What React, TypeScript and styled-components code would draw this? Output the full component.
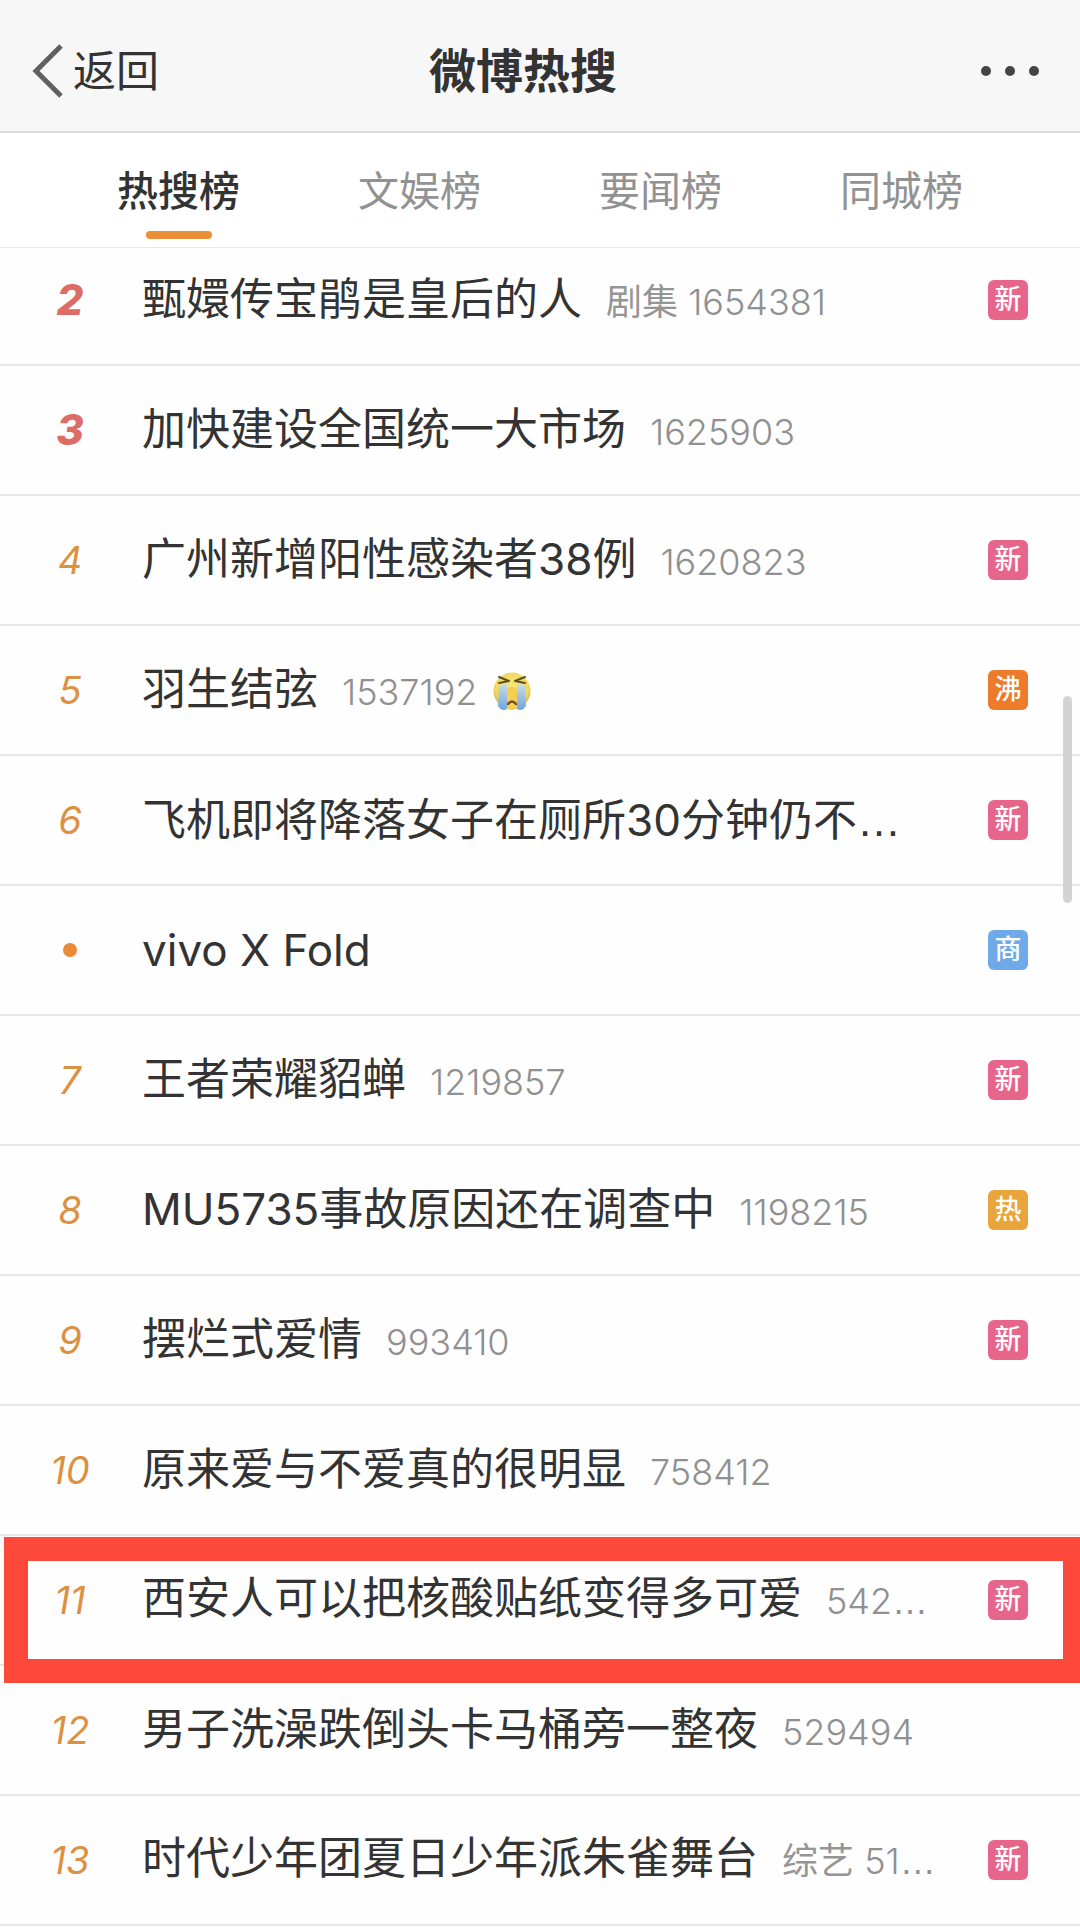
import React from "react";
import styled, { createGlobalStyle, css } from "styled-components";

const GlobalStyle = createGlobalStyle`
  *, *::before, *::after { box-sizing: border-box; }
  body {
    margin: 0;
    background: #fefefe;
    color: #333;
    font-family: Inter, "Noto Sans CJK SC", sans-serif;
    overflow-x: hidden;
  }
  button { border: 0; padding: 0; background: none; font: inherit; color: inherit; cursor: pointer; }
`;

const Page = styled.div`
  position: relative;
  overflow: hidden;
`;

const Header = styled.header`
  display: grid;
  grid-template-columns: 1fr auto 1fr;
  align-items: center;
  height: 133px;
  padding: 10px 40px 0 32px;
  background: #f7f7f7;
  border-bottom: 2px solid #dcdcdc;
`;

const BackButton = styled.button`
  display: flex;
  align-items: center;
  justify-self: start;
  gap: 9px;
  font-size: 43px;
  line-height: 56px;
`;

const Title = styled.h1`
  margin: 0;
  padding-right: 26px;
  font-size: 47px;
  line-height: 56px;
  font-weight: 700;
`;

const MoreButton = styled.button`
  display: flex;
  justify-self: end;
`;

const Tabs = styled.nav`
  position: relative;
  z-index: 1;
  display: grid;
  grid-template-columns: repeat(4, 1fr);
  height: 115px;
  padding: 0 58px;
  background: #fff;
  border-bottom: 1px solid #e8e8e8;
`;

const Tab = styled.button<{ $active?: boolean }>`
  display: flex;
  flex-direction: column;
  align-items: center;
  padding-top: 30px;
  font-size: 41px;
  line-height: 56px;
  color: #929292;
  ${(p) =>
    p.$active &&
    css`
      color: #333;
      font-weight: 500;
      &::after {
        content: "";
        width: 66px;
        height: 8px;
        margin-top: 12px;
        border-radius: 4px;
        background: #ea8f35;
      }
    `}
`;

/* The list is scrolled a little way under the tab bar. */
const List = styled.ol`
  list-style: none;
  margin: -12px 0 0;
  padding: 0;
`;

const Row = styled.li`
  position: relative;
  height: 130px;
  border-bottom: 2px solid #e6e6e6;
`;

const RowLink = styled.a`
  display: grid;
  grid-template-columns: 142px 1fr 40px;
  align-items: center;
  height: 100%;
  padding-right: 52px;
  color: inherit;
  text-decoration: none;
`;

const Rank = styled.span<{ $top?: boolean }>`
  display: flex;
  justify-content: center;
  padding-right: 2px;
  font-size: 38px;
  line-height: 56px;
  font-style: italic;
  color: #dc9142;
  ${(p) =>
    p.$top &&
    css`
      font-size: 42px;
      font-weight: 800;
      color: #dd6b66;
    `}
`;

const Dot = styled.i`
  width: 14px;
  height: 14px;
  border-radius: 50%;
  background: #ea8a35;
`;

const Topic = styled.span`
  display: flex;
  align-items: baseline;
  gap: 24px;
  min-width: 0;
  white-space: nowrap;
  font-size: 44px;
  line-height: 60px;
`;

const Heat = styled.span`
  display: flex;
  align-items: baseline;
  gap: 16px;
  font-size: 36px;
  font-weight: 300;
  color: #909090;
  svg { align-self: center; }
`;

const Category = styled.span`
  font-weight: 400;
  color: #959595;
`;

const Ellipsis = styled.span`
  font-family: "Liberation Sans", sans-serif;
`;

const badgeColors = {
  新: "#e7658a",
  沸: "#ee7a2c",
  商: "#70a9ea",
  热: "#eaa43c",
};

type BadgeKind = keyof typeof badgeColors;

const Badge = styled.span<{ $kind: BadgeKind }>`
  display: flex;
  align-items: center;
  justify-content: center;
  height: 40px;
  border-radius: 6px;
  background: ${(p) => badgeColors[p.$kind]};
  color: #fff;
  font-size: 27px;
  line-height: 40px;
  font-weight: 500;
`;

const Marker = styled.div`
  position: absolute;
  top: 1px;
  left: 4px;
  right: -7px;
  height: 146px;
  border: 24px solid #fd493a;
  z-index: 1;
  pointer-events: none;
`;

const ScrollThumb = styled.div`
  position: absolute;
  top: 696px;
  right: 8px;
  width: 9px;
  height: 207px;
  border-radius: 5px;
  background: #d3d3d3;
`;

const CryingFace = () => (
  <svg width="38" height="40" viewBox="0 0 38 40" role="img" aria-label="泪">
    <defs>
      <radialGradient id="face" cx="50%" cy="40%" r="60%">
        <stop offset="0" stopColor="#fbe77a" />
        <stop offset="0.75" stopColor="#f0d65c" />
        <stop offset="1" stopColor="#cdb04a" />
      </radialGradient>
      <linearGradient id="tear" x1="0" y1="0" x2="0" y2="1">
        <stop offset="0" stopColor="#c9dce0" />
        <stop offset="1" stopColor="#6ea4df" />
      </linearGradient>
    </defs>
    <circle cx="19" cy="19" r="18.5" fill="url(#face)" />
    <path d="M6 13 L14 12 L14 37 Q9 40 5 34 Z" fill="url(#tear)" />
    <path d="M32 13 L24 12 L24 37 Q29 40 33 34 Z" fill="url(#tear)" />
    <path d="M14 17 Q19 12 24 17 V36 Q19 40 14 36 Z" fill="#f5cf54" />
    <path d="M6 5 L16 9 L6 11 M32 5 L22 9 L32 11" fill="none" stroke="#5e5128" strokeWidth="2" strokeLinecap="round" strokeLinejoin="round" />
    <path d="M15 32 Q19 27 23 32" fill="none" stroke="#7c4f20" strokeWidth="2.4" strokeLinecap="round" />
  </svg>
);

interface Item {
  rank?: number;
  title: string;
  category?: string;
  heat?: string;
  badge?: BadgeKind;
  crying?: boolean;
  marked?: boolean;
}

const items: Item[] = [
  { rank: 2, title: "甄嬛传宝鹃是皇后的人", category: "剧集", heat: "1654381", badge: "新" },
  { rank: 3, title: "加快建设全国统一大市场", heat: "1625903" },
  { rank: 4, title: "广州新增阳性感染者38例", heat: "1620823", badge: "新" },
  { rank: 5, title: "羽生结弦", heat: "1537192", badge: "沸", crying: true },
  { rank: 6, title: "飞机即将降落女子在厕所30分钟仍不…", badge: "新" },
  { title: "vivo X Fold", badge: "商" },
  { rank: 7, title: "王者荣耀貂蝉", heat: "1219857", badge: "新" },
  { rank: 8, title: "MU5735事故原因还在调查中", heat: "1198215", badge: "热" },
  { rank: 9, title: "摆烂式爱情", heat: "993410", badge: "新" },
  { rank: 10, title: "原来爱与不爱真的很明显", heat: "758412" },
  { rank: 11, title: "西安人可以把核酸贴纸变得多可爱", heat: "542…", badge: "新", marked: true },
  { rank: 12, title: "男子洗澡跌倒头卡马桶旁一整夜", heat: "529494" },
  { rank: 13, title: "时代少年团夏日少年派朱雀舞台", category: "综艺", heat: "51…", badge: "新" },
];

const tabs = ["热搜榜", "文娱榜", "要闻榜", "同城榜"];

/* Sets a trailing ellipsis with wider dots than the text face has. */
const Clipped = ({ text }: { text: string }) =>
  text.endsWith("…") ? (
    <span>
      {text.slice(0, -1)}
      <Ellipsis>…</Ellipsis>
    </span>
  ) : (
    <span>{text}</span>
  );

export default function App() {
  return (
    <Page>
      <GlobalStyle />
      <Header>
        <BackButton>
          <svg width="32" height="54" viewBox="0 0 32 54" aria-hidden="true">
            <path d="M29 2 L4 27 L29 52" fill="none" stroke="#606060" strokeWidth="5" />
          </svg>
          返回
        </BackButton>
        <Title>微博热搜</Title>
        <MoreButton aria-label="更多">
          <svg width="60" height="12" viewBox="0 0 60 12" aria-hidden="true">
            <g fill="#444">
              <circle cx="6" cy="6" r="5" />
              <circle cx="30" cy="6" r="5" />
              <circle cx="54" cy="6" r="5" />
            </g>
          </svg>
        </MoreButton>
      </Header>
      <Tabs>
        {tabs.map((name, i) => (
          <Tab key={name} $active={i === 0}>
            {name}
          </Tab>
        ))}
      </Tabs>
      <List>
        {items.map((item) => (
          <Row key={item.title}>
            <RowLink href="#">
              <Rank $top={item.rank !== undefined && item.rank <= 3}>{item.rank ?? <Dot />}</Rank>
              <Topic>
                <Clipped text={item.title} />
                {item.heat && (
                  <Heat>
                    <span>
                      {item.category && <Category>{item.category} </Category>}
                      <Clipped text={item.heat} />
                    </span>
                    {item.crying && <CryingFace />}
                  </Heat>
                )}
              </Topic>
              {item.badge && <Badge $kind={item.badge}>{item.badge}</Badge>}
            </RowLink>
            {item.marked && <Marker />}
          </Row>
        ))}
      </List>
      <ScrollThumb />
    </Page>
  );
}
